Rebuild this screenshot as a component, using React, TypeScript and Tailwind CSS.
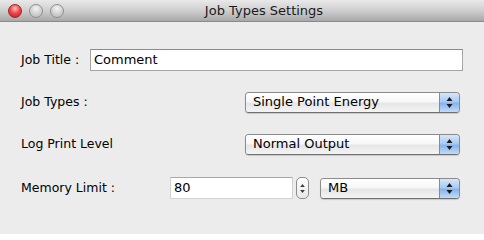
import React from 'react';

const font = { fontFamily: '"DejaVu Sans", "Liberation Sans", sans-serif' };

function Light({ red }: { red?: boolean }) {
  return (
    <span
      className={`block w-[14px] h-[14px] rounded-full border ${
        red
          ? 'border-[#9a2a2a] bg-[radial-gradient(circle_at_50%_30%,_#ffc0c0_0%,_#f2474c_45%,_#c1161d_100%)]'
          : 'border-[#8e8e8e] bg-[radial-gradient(circle_at_50%_30%,_#f4f4f4_0%,_#d3d3d3_50%,_#b7b7b7_100%)]'
      }`}
    />
  );
}

function Arrows({ small }: { small?: boolean }) {
  if (small) {
    return (
      <svg width="5" height="13" viewBox="0 0 5 13">
        <path d="M2.5 2 L4.8 5 L0.2 5 Z" fill="#3a3a3a" />
        <path d="M2.5 11 L4.8 8 L0.2 8 Z" fill="#3a3a3a" />
      </svg>
    );
  }
  return (
    <svg width="7" height="13" viewBox="0 0 7 13">
      <path d="M3.5 1 L6.5 5 L0.5 5 Z" fill="#1c1c1c" />
      <path d="M3.5 12 L6.5 8 L0.5 8 Z" fill="#1c1c1c" />
    </svg>
  );
}

function Select({ value, width }: { value: string; width: string }) {
  return (
    <div
      className={`${width} h-[21px] flex rounded-[4px] border border-[#8b8b8b] border-b-[#6f6f6f] overflow-hidden shadow-[0_1px_1px_rgba(0,0,0,0.15)]`}
    >
      <div className="flex-1 flex items-center pl-[7px] text-[13px] text-black bg-[linear-gradient(#ffffff_0%,_#f7f7f7_45%,_#e6e6e6_55%,_#f4f4f4_100%)]">
        {value}
      </div>
      <div className="w-[20px] flex items-center justify-center border-l border-[#6f8fb8] bg-[linear-gradient(#d6e7fb_0%,_#a9cbf3_45%,_#86b4ec_55%,_#c2dcf9_100%)]">
        <Arrows />
      </div>
    </div>
  );
}

export default function App() {
  return (
    <div className="w-[484px] h-[234px] bg-[#ececec] text-black text-[12.5px]" style={font}>
      {/* title bar */}
      <div className="relative h-[22px] flex items-center justify-center pl-[44px] border-b border-[#8a8a8a] bg-[linear-gradient(#e9e9e9_0%,_#cfcfcf_50%,_#a8a8a8_100%)]">
        <div className="absolute left-[8px] top-[4px] flex gap-[7px]">
          <Light red />
          <Light />
          <Light />
        </div>
        <span className="text-[13px] text-[#1a1a1a]">Job Types Settings</span>
      </div>

      <div className="pl-[21px]">
        <div className="mt-[27px] h-[22px] flex items-center">
          <span className="w-[69px]">Job Title :</span>
          <div className="w-[373px] h-[22px] flex items-center pl-[3px] bg-white border border-[#a5a5a5] border-t-[#8a8a8a] text-[13px]">
            Comment
          </div>
        </div>

        <div className="mt-[20px] h-[22px] flex items-center">
          <span className="w-[224px]">Job Types :</span>
          <Select value="Single Point Energy" width="w-[215px]" />
        </div>

        <div className="mt-[20px] h-[22px] flex items-center">
          <span className="w-[224px]">Log Print Level</span>
          <Select value="Normal Output" width="w-[215px]" />
        </div>

        <div className="mt-[22px] h-[22px] flex items-center">
          <span className="w-[149px]">Memory Limit :</span>
          <div className="w-[123px] h-[22px] flex items-center pl-[3px] bg-white border border-[#d2d2d2] border-t-[#a8a8a8] text-[13px]">
            80
          </div>
          <div className="ml-[3px] w-[13px] h-[22px] flex items-center justify-center rounded-[5px] border border-[#8e8e8e] bg-[linear-gradient(#ffffff,_#e8e8e8)]">
            <Arrows small />
          </div>
          <div className="ml-[11px]">
            <Select value="MB" width="w-[140px]" />
          </div>
        </div>
      </div>
    </div>
  );
}
